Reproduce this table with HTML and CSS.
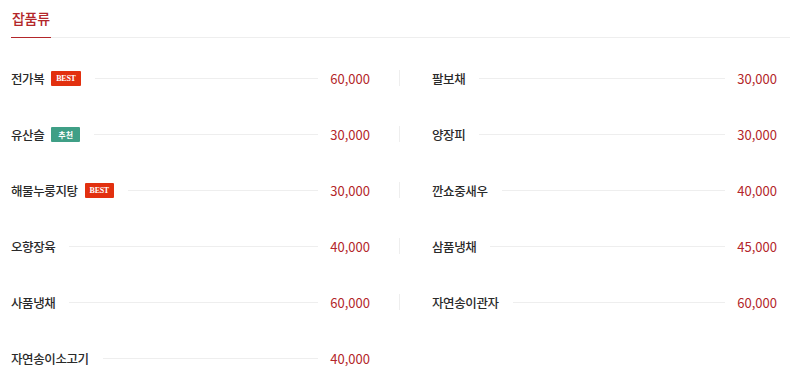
FILE: index.html
```html
<!DOCTYPE html>
<html lang="ko">
<head>
<meta charset="utf-8">
<link rel="stylesheet" href="styles.css">
</head>
<body>
<section class="menu">
  <h2 class="menu-title"><span>잡품류</span></h2>
  <ul class="menu-list">
    <li class="item"><span class="name">전가복</span><span class="badge best">BEST</span><span class="line"></span><span class="price">60,000</span></li>
    <li class="item"><span class="name">팔보채</span><span class="line"></span><span class="price">30,000</span></li>
    <li class="item"><span class="name">유산슬</span><span class="badge rec">추천</span><span class="line"></span><span class="price">30,000</span></li>
    <li class="item"><span class="name">양장피</span><span class="line"></span><span class="price">30,000</span></li>
    <li class="item"><span class="name">해물누룽지탕</span><span class="badge best">BEST</span><span class="line"></span><span class="price">30,000</span></li>
    <li class="item"><span class="name">깐쇼중새우</span><span class="line"></span><span class="price">40,000</span></li>
    <li class="item"><span class="name">오향장육</span><span class="line"></span><span class="price">40,000</span></li>
    <li class="item"><span class="name">삼품냉채</span><span class="line"></span><span class="price">45,000</span></li>
    <li class="item"><span class="name">사품냉채</span><span class="line"></span><span class="price">60,000</span></li>
    <li class="item"><span class="name">자연송이관자</span><span class="line"></span><span class="price">60,000</span></li>
    <li class="item"><span class="name">자연송이소고기</span><span class="line"></span><span class="price">40,000</span></li>
  </ul>
</section>
</body>
</html>
```
FILE: styles.css
```css
* { box-sizing: border-box; }
body {
  margin: 0;
  background: #fff;
  font-family: "Noto Sans CJK KR", "Noto Sans", sans-serif;
  color: #222;
}
.menu {
  padding: 8px 10px 0 11px;
}
.menu-title {
  margin: 0;
  font-size: 14px;
  font-weight: 500;
  color: #b3262a;
  border-bottom: 1px solid #eee;
  line-height: 20px;
  letter-spacing: -0.3px;
}
.menu-title span {
  display: inline-block;
  padding: 0 1px 9px 1px;
  border-bottom: 1px solid #b3262a;
  margin-bottom: -1px;
}
.menu-list {
  list-style: none;
  margin: 0;
  padding: 0;
  display: grid;
  grid-template-columns: 389px 1fr;
  grid-auto-rows: 20px;
  row-gap: 36px;
  padding-top: 30px;
}
.item {
  display: flex;
  align-items: center;
  height: 20px;
  font-size: 12px;
}
.item:nth-child(odd) {
  padding-right: 30px;
  position: relative;
}
.item:nth-child(odd)::after {
  content: "";
  position: absolute;
  right: 0;
  top: 2px;
  width: 1px;
  height: 16px;
  background: #eee;
}
.item:nth-child(odd):last-child::after {
  display: none;
}
.item:nth-child(even) {
  padding-left: 32px;
  padding-right: 13px;
}
.name {
  font-size: 12.5px;
  font-weight: 500;
  letter-spacing: -0.4px;
  white-space: nowrap;
  color: #2a2a2a;
}
.badge {
  margin-left: 7px;
  font-size: 8px;
  height: 15px;
  line-height: 15px;
  padding: 0 5px;
  color: #fff;
  font-weight: 700;
  border-radius: 1px;
}
.badge.best {
  background: #e2300f;
  font-family: "Liberation Serif", serif;
  letter-spacing: -0.3px;
}
.badge.rec {
  background: #3f9f86;
  padding: 0 7px;
}
.line {
  flex: 1;
  height: 1px;
  background: #eee;
  margin: 0 12px 0 14px;
}
.price {
  color: #b3262a;
  font-size: 13px;
  letter-spacing: 0;
}
```
